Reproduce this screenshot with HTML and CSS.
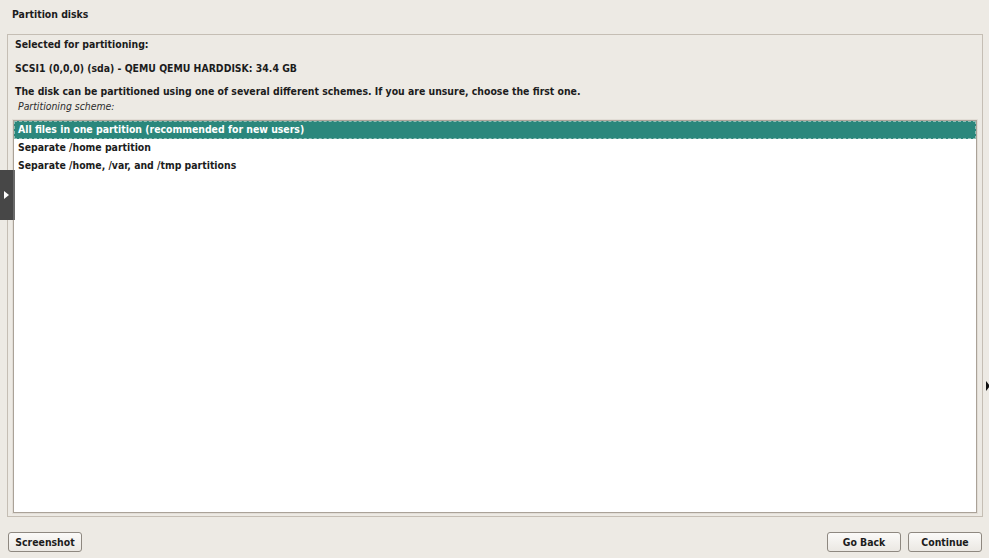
FILE: index.html
```html
<!DOCTYPE html>
<html>
<head>
<meta charset="utf-8">
<title>Partition disks</title>
<link rel="stylesheet" href="styles.css">
</head>
<body>
<div class="page">
  <div class="title">Partition disks</div>
  <div class="frame">
    <p class="line l1">Selected for partitioning:</p>
    <p class="line l2">SCSI1 (0,0,0) (sda) - QEMU QEMU HARDDISK: 34.4 GB</p>
    <p class="line l3">The disk can be partitioned using one of several different schemes. If you are unsure, choose the first one.</p>
    <p class="label">Partitioning scheme:</p>
    <div class="list">
      <div class="row selected">All files in one partition (recommended for new users)</div>
      <div class="row">Separate /home partition</div>
      <div class="row">Separate /home, /var, and /tmp partitions</div>
    </div>
  </div>
  <div class="footer">
    <button class="btn">Screenshot</button>
    <div class="spacer"></div>
    <button class="btn">Go Back</button>
    <button class="btn">Continue</button>
  </div>
</div>
<div class="side-tab"><span class="tri"></span></div>
<div class="cursor-mark"></div>
</body>
</html>
```

FILE: styles.css
```css
html, body {
  margin: 0;
  padding: 0;
  height: 100%;
}
body {
  background: #edeae4;
  font-family: "DejaVu Sans Condensed", "DejaVu Sans", sans-serif;
  font-weight: bold;
  font-size: 10.4px;
  color: #1c1c1c;
  overflow: hidden;
}
.page {
  display: flex;
  flex-direction: column;
  height: 558px;
}
.title {
  height: 34px;
  line-height: 16px;
  padding: 6px 0 0 12px;
  box-sizing: border-box;
}
.frame {
  margin: 0 6px 0 7px;
  height: 483px;
  border: 1px solid #c5beb4;
  box-sizing: border-box;
  display: flex;
  flex-direction: column;
}
.line {
  margin: 0;
  line-height: 16px;
  padding-left: 7px;
}
.l1 { margin-top: 1px; }
.l2 { margin-top: 8px; }
.l3 { margin-top: 7px; }
.label {
  margin: 0;
  padding-left: 10px;
  line-height: 14px;
  height: 14px;
  font-style: italic;
  font-weight: normal;
  color: #2c2c2c;
  font-size: 10.4px;
}
.list {
  margin: 7px 5px 3px 5px;
  flex: 1;
  background: #fff;
  border: 1px solid #aaa298;
  box-shadow: 0 0 0 1px #e2ddd6;
  padding: 0;
}
.row {
  height: 18px;
  line-height: 16px;
  padding: 0 0 2px 4px;
  box-sizing: border-box;
}
.row.selected {
  background: #2b877c;
  color: #fff;
  border: 1px dashed #8fbfb7;
  line-height: 15px;
  padding: 0 0 1px 3px;
}
.footer {
  display: flex;
  align-items: flex-start;
  padding: 15px 7px 0 8px;
  gap: 7px;
}
.spacer { flex: 1; }
.btn {
  font-family: "DejaVu Sans Condensed", "DejaVu Sans", sans-serif;
  font-weight: bold;
  font-size: 10.4px;
  color: #1c1c1c;
  height: 20px;
  width: 74px;
  padding: 1px 0 0 0;
  border: 1px solid #8e8880;
  border-radius: 3px;
  background: linear-gradient(#fbfaf8, #ebe8e3);
  line-height: 17px;
}
.side-tab {
  position: absolute;
  left: 0;
  top: 170px;
  width: 13px;
  height: 50px;
  background: #474747;
  border-right: 2px solid #6a6a6a;
}
.side-tab .tri {
  position: absolute;
  left: 4px;
  top: 21px;
  width: 0;
  height: 0;
  border-top: 4px solid transparent;
  border-bottom: 4px solid transparent;
  border-left: 5px solid #fff;
}
.cursor-mark {
  position: absolute;
  left: 986px;
  top: 381px;
  width: 0;
  height: 0;
  border-top: 5px solid transparent;
  border-bottom: 5px solid transparent;
  border-left: 4px solid #111;
}
```
